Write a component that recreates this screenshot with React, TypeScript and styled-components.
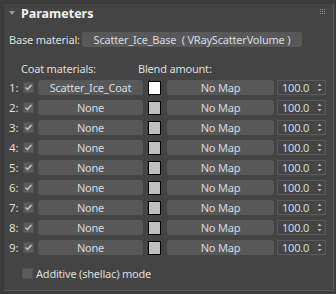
import React from 'react';
import styled, { createGlobalStyle } from 'styled-components';

const GlobalStyle = createGlobalStyle`
    html, body {
        margin: 0;
        padding: 0;
        background: #3c3c3c;
    }
    body {
        font-family: "Noto Sans", "Open Sans", sans-serif;
        font-size: 11px;
        letter-spacing: -0.2px;
        color: #dcdcdc;
    }
`;

const Frame = styled.div`
    width: 336px;
    height: 294px;
    box-sizing: border-box;
    padding: 3px 2px 3px 3px;
    background: #3c3c3c;
`;

const Panel = styled.div`
    height: 100%;
    box-sizing: border-box;
    background: #444444;
    border: 1px solid #383838;
    border-right-color: #5a5a5a;
    border-bottom-color: #5a5a5a;
    border-radius: 2px;
    position: relative;
`;

const Header = styled.div`
    display: flex;
    align-items: center;
    height: 18px;
    padding: 0 0 0 5px;
    gap: 6px;
`;

const Triangle = styled.div`
    width: 0;
    height: 0;
    border-left: 3px solid transparent;
    border-right: 3px solid transparent;
    border-top: 4px solid #9a9a9a;
`;

const Title = styled.span`
    font-weight: bold;
    font-size: 12.5px;
    letter-spacing: 0;
    color: #f0f0f0;
`;

const Grip = styled.div`
    position: absolute;
    top: 5px;
    right: 8px;
    display: grid;
    grid-template-columns: repeat(3, 1px);
    gap: 1px;
    span {
        width: 1px;
        height: 1px;
        background: #8a8a8a;
    }
`;

const BaseRow = styled.div`
    display: flex;
    align-items: center;
    padding: 10px 0 0 5px;
`;

const Label = styled.span<{ $width?: number }>`
    color: #dedede;
    white-space: nowrap;
    ${(p) => (p.$width ? `width: ${p.$width}px;` : '')}
`;

const Button = styled.div<{ $width: number }>`
    width: ${(p) => p.$width}px;
    height: 15px;
    box-sizing: border-box;
    background: #585858;
    border-radius: 3px;
    color: #d4dae0;
    display: flex;
    align-items: center;
    justify-content: center;
    white-space: nowrap;
    overflow: hidden;
`;

const HeadRow = styled.div`
    display: flex;
    padding: 13px 0 0 17px;
    height: 16px;
    align-items: center;
`;

const Grid = styled.div`
    display: grid;
    grid-template-columns: 14px 15px 110px 19px 110px 49px;
    row-gap: 5px;
    padding: 4px 0 0 5px;
    align-items: center;
`;

const RowNum = styled.span`
    color: #dedede;
    font-size: 11.5px;
`;

const Check = styled.div`
    width: 11px;
    height: 11px;
    background: #5c5c5c;
    border: 1px solid #505050;
    box-sizing: border-box;
    display: flex;
    align-items: center;
    justify-content: center;
`;

const Swatch = styled.div<{ $color: string }>`
    width: 13px;
    height: 14px;
    box-sizing: border-box;
    background: ${(p) => p.$color};
    border: 1px solid #000;
`;

const Spinner = styled.div`
    width: 49px;
    height: 15px;
    box-sizing: border-box;
    border: 1px solid #5a5a5a;
    background: #454545;
    display: flex;
    align-items: center;
    justify-content: space-between;
    padding: 0 3px 0 4px;
    color: #d4dae0;
`;

const Footer = styled.div`
    display: flex;
    align-items: center;
    gap: 3px;
    padding: 11px 0 0 18px;
`;

const CheckMark = () => (
    <svg width="9" height="9" viewBox="0 0 9 9">
        <path d="M1.5 4.5 L3.5 6.5 L7.5 2" stroke="#c4c4c4" strokeWidth="1.5" fill="none" />
    </svg>
);

const Arrows = () => (
    <svg width="5" height="9" viewBox="0 0 5 9">
        <path d="M2.5 0.5 L4.5 3 L0.5 3 Z" fill="#b8b8b8" />
        <path d="M0.5 6 L4.5 6 L2.5 8.5 Z" fill="#b8b8b8" />
    </svg>
);

const rows = [1, 2, 3, 4, 5, 6, 7, 8, 9];

export default function App() {
    return (
        <Frame>
            <GlobalStyle />
            <Panel>
                <Header>
                    <Triangle />
                    <Title>Parameters</Title>
                </Header>
                <Grip>
                    {Array.from({ length: 9 }).map((_, i) => (
                        <span key={i} />
                    ))}
                </Grip>
                <BaseRow>
                    <Label $width={73}>Base material:</Label>
                    <Button $width={220}>Scatter_Ice_Base&nbsp;&nbsp;( VRayScatterVolume )</Button>
                </BaseRow>
                <HeadRow>
                    <Label $width={117}>Coat materials:</Label>
                    <Label $width={100}>Blend amount:</Label>
                </HeadRow>
                <Grid>
                    {rows.map((n) => (
                        <React.Fragment key={n}>
                            <RowNum>{n}:</RowNum>
                            <Check>
                                <CheckMark />
                            </Check>
                            <Button $width={105}>{n === 1 ? 'Scatter_Ice_Coat' : 'None'}</Button>
                            <Swatch $color={n === 1 ? '#ffffff' : '#c0c0c0'} />
                            <Button $width={107}>No Map</Button>
                            <Spinner>
                                <span>100.0</span>
                                <Arrows />
                            </Spinner>
                        </React.Fragment>
                    ))}
                </Grid>
                <Footer>
                    <Check />
                    <Label>Additive (shellac) mode</Label>
                </Footer>
            </Panel>
        </Frame>
    );
}
